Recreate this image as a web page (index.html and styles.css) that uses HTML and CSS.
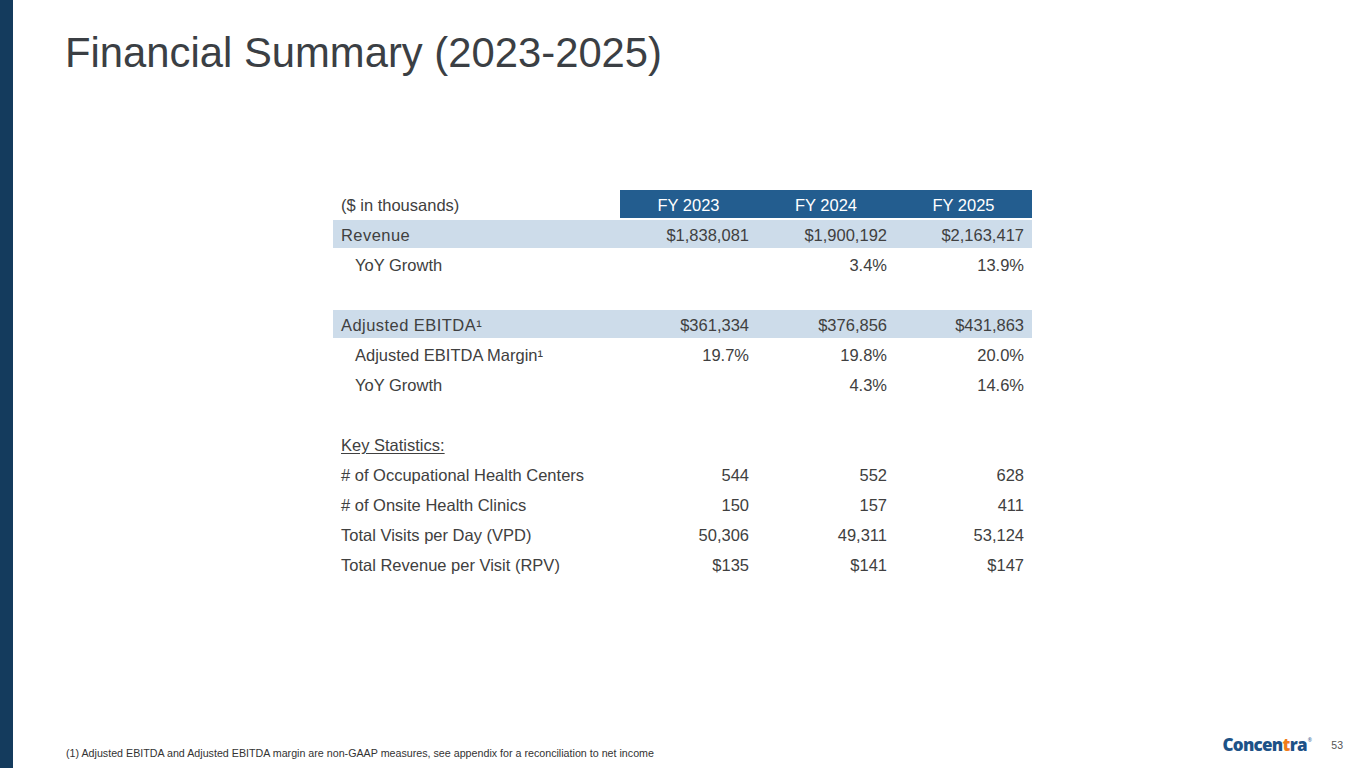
FILE: index.html
```html
<!DOCTYPE html>
<html lang="en">
<head>
<meta charset="utf-8">
<title>Financial Summary (2023-2025)</title>
<link rel="stylesheet" href="styles.css">
</head>
<body>
<div class="slide">
  <div class="bar"></div>
  <div class="content">
    <h1 class="title">Financial Summary (2023-2025)</h1>
    <div class="table">
      <div class="row head">
        <div class="cell label">($ in thousands)</div>
        <div class="cell hd">FY 2023</div>
        <div class="cell hd">FY 2024</div>
        <div class="cell hd">FY 2025</div>
      </div>
      <div class="row band">
        <div class="cell label spaced">Revenue</div>
        <div class="cell num">$1,838,081</div>
        <div class="cell num">$1,900,192</div>
        <div class="cell num">$2,163,417</div>
      </div>
      <div class="row">
        <div class="cell label indent">YoY Growth</div>
        <div class="cell num"></div>
        <div class="cell num">3.4%</div>
        <div class="cell num">13.9%</div>
      </div>
      <div class="row"></div>
      <div class="row band">
        <div class="cell label spaced">Adjusted EBITDA¹</div>
        <div class="cell num">$361,334</div>
        <div class="cell num">$376,856</div>
        <div class="cell num">$431,863</div>
      </div>
      <div class="row">
        <div class="cell label indent">Adjusted EBITDA Margin¹</div>
        <div class="cell num">19.7%</div>
        <div class="cell num">19.8%</div>
        <div class="cell num">20.0%</div>
      </div>
      <div class="row">
        <div class="cell label indent">YoY Growth</div>
        <div class="cell num"></div>
        <div class="cell num">4.3%</div>
        <div class="cell num">14.6%</div>
      </div>
      <div class="row"></div>
      <div class="row">
        <div class="cell label"><span class="ul">Key Statistics:</span></div>
      </div>
      <div class="row">
        <div class="cell label"># of Occupational Health Centers</div>
        <div class="cell num">544</div>
        <div class="cell num">552</div>
        <div class="cell num">628</div>
      </div>
      <div class="row">
        <div class="cell label"># of Onsite Health Clinics</div>
        <div class="cell num">150</div>
        <div class="cell num">157</div>
        <div class="cell num">411</div>
      </div>
      <div class="row">
        <div class="cell label">Total Visits per Day (VPD)</div>
        <div class="cell num">50,306</div>
        <div class="cell num">49,311</div>
        <div class="cell num">53,124</div>
      </div>
      <div class="row">
        <div class="cell label">Total Revenue per Visit (RPV)</div>
        <div class="cell num">$135</div>
        <div class="cell num">$141</div>
        <div class="cell num">$147</div>
      </div>
    </div>
    <div class="footer">
      <p class="note">(1) Adjusted EBITDA and Adjusted EBITDA margin are non-GAAP measures, see appendix for a reconciliation to net income</p>
      <div class="brand">
        <span class="logo">Concen<span class="logo-t">t</span>ra<sup class="reg">®</sup></span>
        <span class="page">53</span>
      </div>
    </div>
  </div>
</div>
</body>
</html>
```

FILE: styles.css
```css
* { box-sizing: border-box; }
html, body { margin: 0; padding: 0; background: #ffffff; }
body { font-family: "Liberation Sans", Arial, sans-serif; color: #404040; }

.slide {
  width: 1365px;
  height: 768px;
  display: flex;
  overflow: hidden;
}
.bar {
  width: 13px;
  flex: none;
  background: #143b5d;
}
.content {
  flex: 1;
  display: flex;
  flex-direction: column;
  padding: 29px 22px 0 52px;
}
.title {
  margin: 0;
  font-weight: normal;
  font-size: 41.8px;
  line-height: 48px;
  color: #3b3f44;
}
.table {
  margin: 113px 0 0 268px;
  width: 699px;
  display: flex;
  flex-direction: column;
  gap: 2px;
  font-size: 16.5px;
}
.row {
  display: grid;
  grid-template-columns: 287px 137px 138px 137px;
  height: 28px;
  align-items: stretch;
}
.cell {
  display: flex;
  align-items: center;
  white-space: nowrap;
  padding-top: 3px;
}
.label { padding-left: 8px; }
.label.indent { padding-left: 22px; }
.label.spaced { letter-spacing: 0.45px; }
.num { justify-content: flex-end; padding-right: 8px; }
.hd {
  justify-content: center;
  background: #235d8f;
  color: #ffffff;
}
.band { background: #cddcea; }
.ul { text-decoration: underline; text-underline-offset: 2px; }

.footer {
  margin-top: auto;
  display: flex;
  align-items: flex-end;
  justify-content: space-between;
  padding-bottom: 9px;
}
.note {
  margin: 0 0 0 1px;
  font-size: 10.7px;
  color: #333333;
}
.brand {
  display: flex;
  align-items: center;
  gap: 20px;
  margin-bottom: 6px;
}
.logo {
  font-family: "Open Sans", "Liberation Sans", sans-serif;
  font-weight: 800;
  font-size: 17px;
  letter-spacing: -0.7px;
  color: #1d5287;
  line-height: 1;
}
.logo-t { color: #f07d1a; }
.reg { font-size: 5px; font-weight: normal; vertical-align: 9px; margin-left: 1px; }
.page {
  font-size: 10.5px;
  color: #555555;
}
```
